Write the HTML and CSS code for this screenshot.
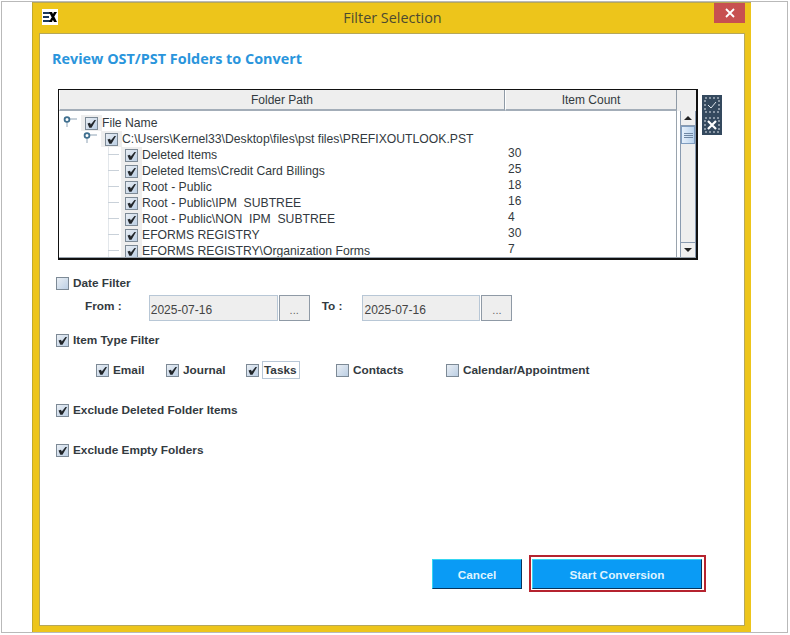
FILE: index.html
```html
<!DOCTYPE html>
<html lang="en">
<head>
  <meta charset="UTF-8" />
  <title>Filter Selection</title>
  <link rel="stylesheet" href="styles.css">
</head>
<body>
  <svg class="defs" width="0" height="0">
    <symbol id="tick" viewBox="0 0 13 13">
      <polygon points="2.500,6.500 5,5.800 5.800,7.500 9.500,3 11,3 6.500,10.800 4.300,10.800" fill="#22262a" />
    </symbol>
    <symbol id="handle" viewBox="0 0 16 16">
      <path d="M5 6V12M8 4H15" stroke="#8fa3b5" fill="none" />
      <circle cx="5" cy="4.500" r="2.400" fill="#fff" stroke="#3f6f8f" stroke-width="1.800" />
    </symbol>
  </svg>

  <div class="frame">
    <div class="window">
      <div class="titlebar">
        <svg class="logo" viewBox="0 0 16 16">
          <rect width="16" height="16" fill="#fff" />
          <path d="M1 3H8V5H1ZM1 7H7V9H1ZM1 11H8V13H1Z" fill="#1d3a5c" />
          <path d="M7 3H10L15 13H12ZM12 3H15L12 8 10.500 6ZM7 13 9.500 8.500 11 10.500 10 13Z" fill="#000" />
        </svg>
        <div class="title">Filter Selection</div>
        <div class="close">
          <svg width="10" height="10" viewBox="0 0 10 10"><path d="M1 1L9 9M9 1L1 9" stroke="#fff" stroke-width="1.800" /></svg>
        </div>
      </div>

      <div class="panel">
        <h1>Review OST/PST Folders to Convert</h1>

        <div class="table-row">
          <div class="table">
            <div class="thead">
              <div class="th th-path">Folder Path</div>
              <div class="th th-count">Item Count</div>
              <div class="th-rest"></div>
            </div>
            <div class="tbody">
              <div class="tree">
                <div class="row">
                  <svg class="handle l0"><use href="#handle" /></svg>
                  <span class="cell"><span class="cb"><svg><use href="#tick" /></svg></span></span>
                  <span class="name">File Name</span>
                </div>
                <div class="row">
                  <svg class="handle l1"><use href="#handle" /></svg>
                  <span class="cell"><span class="cb"><svg><use href="#tick" /></svg></span></span>
                  <span class="name">C:\Users\Kernel33\Desktop\files\pst files\PREFIXOUTLOOK.PST</span>
                </div>
                <div class="row leaf">
                  <span class="branch"></span>
                  <span class="cell"><span class="cb"><svg><use href="#tick" /></svg></span></span>
                  <span class="name">Deleted Items</span>
                  <span class="count">30</span>
                </div>
                <div class="row leaf">
                  <span class="branch"></span>
                  <span class="cell"><span class="cb"><svg><use href="#tick" /></svg></span></span>
                  <span class="name">Deleted Items\Credit Card Billings</span>
                  <span class="count">25</span>
                </div>
                <div class="row leaf">
                  <span class="branch"></span>
                  <span class="cell"><span class="cb"><svg><use href="#tick" /></svg></span></span>
                  <span class="name">Root - Public</span>
                  <span class="count">18</span>
                </div>
                <div class="row leaf">
                  <span class="branch"></span>
                  <span class="cell"><span class="cb"><svg><use href="#tick" /></svg></span></span>
                  <span class="name">Root - Public\IPM&nbsp;&nbsp;SUBTREE</span>
                  <span class="count">16</span>
                </div>
                <div class="row leaf">
                  <span class="branch"></span>
                  <span class="cell"><span class="cb"><svg><use href="#tick" /></svg></span></span>
                  <span class="name">Root - Public\NON&nbsp;&nbsp;IPM&nbsp;&nbsp;SUBTREE</span>
                  <span class="count">4</span>
                </div>
                <div class="row leaf">
                  <span class="branch"></span>
                  <span class="cell"><span class="cb"><svg><use href="#tick" /></svg></span></span>
                  <span class="name">EFORMS REGISTRY</span>
                  <span class="count">30</span>
                </div>
                <div class="row leaf">
                  <span class="branch"></span>
                  <span class="cell"><span class="cb"><svg><use href="#tick" /></svg></span></span>
                  <span class="name">EFORMS REGISTRY\Organization Forms</span>
                  <span class="count">7</span>
                </div>
              </div>
              <div class="scrollbar">
                <div class="sb-btn"><span class="arrow-up"></span></div>
                <div class="sb-thumb"><span></span></div>
                <div class="sb-track"></div>
                <div class="sb-btn"><span class="arrow-down"></span></div>
              </div>
            </div>
          </div>

          <div class="side-btns">
            <div class="side-btn">
              <svg width="20" height="20" viewBox="0 0 20 20">
                <rect x="3" y="3" width="14" height="14" fill="none" stroke="#dfe6ec" stroke-dasharray="2 2" />
                <path d="M6 10L9 13L14 7" fill="none" stroke="#dfe6ec" />
              </svg>
            </div>
            <div class="side-btn">
              <svg width="20" height="20" viewBox="0 0 20 20">
                <rect x="3" y="3" width="14" height="14" fill="none" stroke="#dfe6ec" stroke-dasharray="2 2" />
                <path d="M6 6L14 14M14 6L6 14" fill="none" stroke="#fff" stroke-width="2.200" />
              </svg>
            </div>
          </div>
        </div>

        <div class="opt opt-date">
          <span class="cb"></span><span>Date Filter</span>
        </div>
        <div class="dates">
          <span class="date-label from">From :</span>
          <div class="date-input from-input">2025-07-16</div>
          <div class="dots">...</div>
          <span class="date-label to">To :</span>
          <div class="date-input to-input">2025-07-16</div>
          <div class="dots">...</div>
        </div>

        <div class="opt opt-type">
          <span class="cb"><svg><use href="#tick" /></svg></span><span>Item Type Filter</span>
        </div>
        <div class="types">
          <div class="opt type-email"><span class="cb"><svg><use href="#tick" /></svg></span><span>Email</span></div>
          <div class="opt type-journal"><span class="cb"><svg><use href="#tick" /></svg></span><span>Journal</span></div>
          <div class="opt type-tasks"><span class="cb"><svg><use href="#tick" /></svg></span><span class="focused">Tasks</span></div>
          <div class="opt type-contacts"><span class="cb"></span><span>Contacts</span></div>
          <div class="opt"><span class="cb"></span><span>Calendar/Appointment</span></div>
        </div>

        <div class="opt opt-deleted">
          <span class="cb"><svg><use href="#tick" /></svg></span><span>Exclude Deleted Folder Items</span>
        </div>
        <div class="opt opt-empty">
          <span class="cb"><svg><use href="#tick" /></svg></span><span>Exclude Empty Folders</span>
        </div>

        <div class="actions">
          <div class="btn btn-cancel">Cancel</div>
          <div class="highlight"><div class="btn btn-start">Start Conversion</div></div>
        </div>
      </div>
    </div>
  </div>
</body>
</html>
```

FILE: styles.css
```css
:root {
  --yellow: #edc51b;
  --text: #333a40;
  --field: #eeeeee;
}
* {
  box-sizing: border-box;
}
body {
  margin: 0;
  background: #fff;
  font-family: "Liberation Sans", Arial, sans-serif;
  font-size: 12px;
  color: var(--text);
}
.defs {
  position: absolute;
}
.frame {
  width: 787px;
  height: 632px;
  margin: 1px 0 0 1px;
  padding-left: 30px;
  border: 1px solid #b9b9b9;
  overflow: hidden;
}
.window {
  display: flex;
  flex-direction: column;
  width: 719px;
  height: 630px;
  padding: 0 6px 6px 6px;
  background: var(--yellow);
  border-top: 1px solid #b5a75a;
  border-left: 1px solid #c2a92a;
}

/* title bar */
.titlebar {
  display: flex;
  align-items: flex-start;
  height: 30px;
  flex-shrink: 0;
}
.logo {
  width: 16px;
  height: 16px;
  margin: 6px 0 0 3px;
}
.title {
  flex: 1;
  padding: 5px 0 0 13px;
  text-align: center;
  font-family: "Open Sans", sans-serif;
  font-size: 14.4px;
  line-height: 20px;
  color: #4c4a30;
}
.close {
  display: flex;
  align-items: center;
  justify-content: center;
  width: 31px;
  height: 20px;
  background: #c75050;
}

/* main panel */
.panel {
  flex: 1;
  background: #fff;
  border: 1px solid #b5a75a;
  padding: 0 0 0 12px;
}
h1 {
  margin: 15px 0 0;
  font-family: "Open Sans", sans-serif;
  font-size: 14.4px;
  line-height: 20px;
  font-weight: 700;
  color: #2a95dc;
}

/* folder table */
.table-row {
  display: flex;
  align-items: flex-start;
  margin: 20px 0 0 6px;
}
.table {
  width: 640px;
  height: 171px;
  border: 2px solid #111;
  border-width: 1px 2px 2px 1px;
  overflow: hidden;
}
.thead {
  display: flex;
  height: 21px;
  background: #eeeeee;
}
.th {
  text-align: center;
  line-height: 20px;
  border-bottom: 2px solid #a3adb8;
  border-right: 1px solid #8f9aa6;
  border-left: 1px solid #fff;
}
.th-path {
  width: 446px;
}
.th-count {
  width: 172px;
}
.th-rest {
  flex: 1;
}
.tbody {
  display: flex;
  height: 147px;
  border-bottom: 1px solid #9aa4ae;
}
.tree {
  flex: 1;
  padding-top: 4px;
  overflow: hidden;
  border-right: 1px solid #9aa4ae;
  font-size: 12.2px;
}
.row {
  display: flex;
  align-items: center;
  height: 16px;
  white-space: nowrap;
}
.handle {
  width: 16px;
  height: 16px;
  flex-shrink: 0;
}
.l0 {
  margin: 0 3px;
}
.l1 {
  margin: 0 3px 0 23px;
}
.cell {
  display: flex;
  align-items: center;
  justify-content: center;
  width: 21px;
  height: 16px;
  flex-shrink: 0;
  background: #eeeeee;
}
.branch {
  width: 13px;
  height: 16px;
  margin-left: 49px;
  flex-shrink: 0;
  background:
    linear-gradient(#c9d1d9, #c9d1d9) 0 7px / 11px 1px no-repeat,
    linear-gradient(#e3e7eb, #e3e7eb) 0 0 / 1px 16px no-repeat;
}
.leaf .name {
  width: 366px;
  flex-shrink: 0;
}
.count {
  margin-bottom: 5px;
  font-size: 12px;
}

/* scroll bar */
.scrollbar {
  display: flex;
  flex-direction: column;
  width: 16px;
  margin-left: 3px;
  background: #eeeeee;
  border-left: 1px solid #8a9bb0;
  border-right: 1px solid #8a9bb0;
}
.sb-btn {
  display: flex;
  align-items: center;
  justify-content: center;
  height: 15px;
  background: #f0f0f0;
  border-bottom: 1px solid #8a9bb0;
}
.sb-btn:last-child {
  border-top: 1px solid #8a9bb0;
  border-bottom: 0;
}
.arrow-up {
  border: 4px solid transparent;
  border-top: 0;
  border-bottom: 4px solid #222;
}
.arrow-down {
  border: 4px solid transparent;
  border-bottom: 0;
  border-top: 4px solid #222;
}
.sb-thumb {
  display: flex;
  align-items: center;
  justify-content: center;
  height: 18px;
  background: linear-gradient(90deg, #e6f0fb, #b9d3ee);
  border: 1px solid #7f9dc0;
}
.sb-thumb span {
  width: 9px;
  height: 5px;
  border-top: 1px solid #6f87a3;
  border-bottom: 1px solid #6f87a3;
  background: linear-gradient(#6f87a3, #6f87a3) 0 1px / 9px 1px no-repeat;
}
.sb-track {
  flex: 1;
}
.side-btns {
  display: flex;
  flex-direction: column;
  margin: 6px 0 0 4px;
}
.side-btn {
  width: 20px;
  height: 20px;
  background: #34495e;
}
.side-btn svg {
  display: block;
}

/* check boxes */
.cb {
  display: block;
  width: 13px;
  height: 13px;
  flex-shrink: 0;
  border: 1px solid #7d8a96;
  background: linear-gradient(135deg, #e9eef4, #bccfe4);
}
.cb svg {
  display: block;
  width: 13px;
  height: 13px;
  margin: -1px;
}
.opt {
  display: flex;
  align-items: center;
  gap: 4px;
  height: 16px;
  font-size: 11.8px;
  font-weight: 700;
  white-space: nowrap;
}
.opt-date,
.opt-type,
.opt-deleted,
.opt-empty {
  margin-left: 4px;
}
.opt-date {
  margin-top: 15px;
}

/* dates */
.dates {
  display: flex;
  align-items: flex-start;
  margin: 4px 0 0 33px;
}
.date-label {
  font-size: 11.8px;
  font-weight: 700;
  line-height: 16px;
  margin-top: 3px;
}
.date-input {
  height: 26px;
  padding-left: 1px;
  line-height: 28px;
  background: var(--field);
  border: 1px solid #b8c7d6;
  color: #444;
}
.from-input {
  width: 129px;
  margin-left: 27px;
}
.to-input {
  width: 118px;
  margin-left: 20px;
}
.dots {
  width: 31px;
  height: 26px;
  margin-left: 1px;
  text-align: center;
  line-height: 28px;
  font-size: 11px;
  color: #666;
  background: #eeeeee;
  border: 1px solid #8f9aa6;
}
.to {
  margin-left: 12px;
}

/* item types */
.opt-type {
  margin-top: 11px;
}
.types {
  display: flex;
  margin: 14px 0 0 44px;
}
.type-email {
  width: 70px;
}
.type-journal {
  width: 80px;
}
.type-tasks {
  width: 90px;
}
.type-contacts {
  width: 110px;
}
.focused {
  padding: 1px 2px 1px 1px;
  margin-left: -1px;
  border: 1px solid #b8c7d6;
}
.opt-deleted {
  margin-top: 24px;
}
.opt-empty {
  margin-top: 24px;
}

/* bottom buttons */
.actions {
  display: flex;
  align-items: center;
  margin: 97px 0 0 380px;
}
.btn {
  height: 30px;
  line-height: 30px;
  text-align: center;
  font-size: 11.8px;
  font-weight: 700;
  color: #dff3ff;
  background: #0a9bf5;
  border: 1px solid;
  border-color: #35d6f2 #07345c #07345c #35d6f2;
}
.btn-cancel {
  width: 90px;
}
.highlight {
  margin-left: 7px;
  padding: 2px 2px 1px 1px;
  border: 2px solid #b5232f;
}
.btn-start {
  width: 170px;
}
```
